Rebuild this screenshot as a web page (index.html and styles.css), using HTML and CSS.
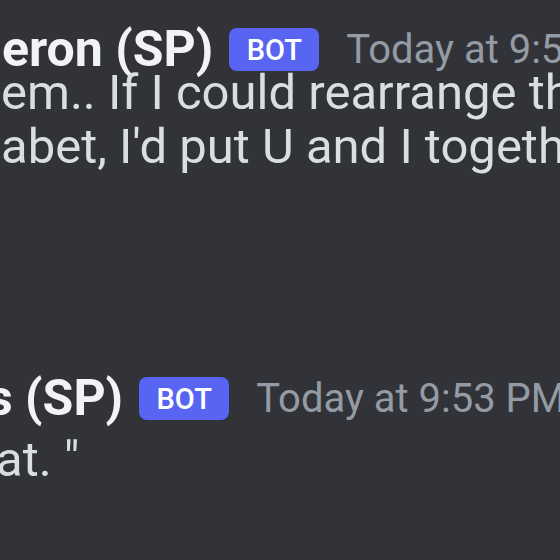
FILE: index.html
```html
<!DOCTYPE html>
<html>
<head>
<meta charset="utf-8">
<link rel="stylesheet" href="styles.css">
</head>
<body>
<div class="chat">
  <div class="msg msg-one">
    <div class="header">
      <span class="name">eron (SP)</span>
      <span class="badge">BOT</span>
      <span class="time">Today at 9:53 PM</span>
    </div>
    <div class="content">
      <div class="line">em.. If I could rearrange the</div>
      <div class="line">abet, I'd put U and I together.</div>
    </div>
  </div>
  <div class="msg msg-two">
    <div class="header">
      <span class="name">s (SP)</span>
      <span class="badge">BOT</span>
      <span class="time">Today at 9:53 PM</span>
    </div>
    <div class="content">
      <div class="line cut">at. "</div>
    </div>
  </div>
</div>
</body>
</html>
```
FILE: styles.css
```css
html, body {
  margin: 0;
  padding: 0;
  background: #313338;
  width: 560px;
  height: 560px;
  overflow: hidden;
}
.chat {
  font-family: Roboto, "Noto Sans", sans-serif;
  display: flex;
  flex-direction: column;
  padding-top: 28px;
  width: 560px;
  overflow: hidden;
}
.msg {
  white-space: nowrap;
}
.msg-one .header {
  margin-left: 2px;
}
.msg-two {
  margin-top: 203px;
}
.msg-two .header {
  margin-left: -13px;
}
.msg-two .content {
  margin-top: 13px;
}
.header {
  display: flex;
  align-items: center;
  height: 43px;
}
.header > span {
  flex-shrink: 0;
}
.name {
  color: #f2f3f5;
  font-weight: 700;
  font-size: 50px;
  line-height: 43px;
}
.badge {
  margin-left: 16px;
  background: #5865f2;
  color: #ffffff;
  font-size: 29px;
  font-weight: 500;
  height: 43px;
  width: 90px;
  display: flex;
  align-items: center;
  justify-content: center;
  border-radius: 8px;
}
.time {
  margin-left: 27px;
  color: #949ba4;
  font-size: 40px;
  line-height: 43px;
}
.content {
  margin-top: -5px;
  color: #dbdee1;
  font-size: 49px;
  line-height: 54px;
}
.line {
  margin-left: 1px;
}
.cut {
  margin-left: -4px;
}
```
